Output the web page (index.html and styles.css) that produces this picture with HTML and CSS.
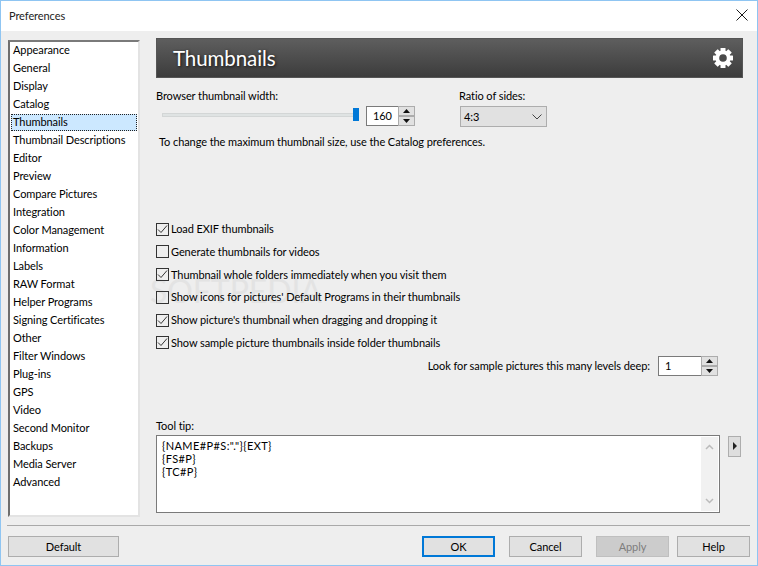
FILE: index.html
```html
<!DOCTYPE html>
<html lang="en">
<head>
<meta charset="utf-8">
<title>Preferences</title>
<link rel="stylesheet" href="styles.css">
</head>
<body>
<div class="window">
  <div class="titlebar">
    <span class="title">Preferences</span>
    <svg class="close" width="12" height="12" viewBox="0 0 12 12"><path d="M.5.5l11 11M11.500.5l-11 11" stroke="#1a1a1a" fill="none"/></svg>
  </div>
  <div class="main">
    <div class="watermark">SOFTPEDIA</div>
    <ul class="nav">
      <li>Appearance</li><li>General</li><li>Display</li><li>Catalog</li>
      <li class="selected">Thumbnails</li><li>Thumbnail Descriptions</li><li>Editor</li><li>Preview</li>
      <li>Compare Pictures</li><li>Integration</li><li>Color Management</li><li>Information</li>
      <li>Labels</li><li>RAW Format</li><li>Helper Programs</li><li>Signing Certificates</li>
      <li>Other</li><li>Filter Windows</li><li>Plug-ins</li><li>GPS</li>
      <li>Video</li><li>Second Monitor</li><li>Backups</li><li>Media Server</li><li>Advanced</li>
    </ul>
    <div class="content">
      <div class="banner">
        <h1>Thumbnails</h1>
        <svg class="gear" width="20" height="20" viewBox="0 0 20 20">
          <g fill="#fff">
            <rect x="7.500" y="0" width="5" height="20" rx=".5"/>
            <rect x="7.500" y="0" width="5" height="20" rx=".5" transform="rotate(45 10 10)"/>
            <rect x="7.500" y="0" width="5" height="20" rx=".5" transform="rotate(90 10 10)"/>
            <rect x="7.500" y="0" width="5" height="20" rx=".5" transform="rotate(135 10 10)"/>
            <circle cx="10" cy="10" r="7.500"/>
          </g>
          <circle cx="10" cy="10" r="3.800" fill="#4a4a4a"/>
        </svg>
      </div>
      <div class="size-row">
        <div class="width-group">
          <div class="label">Browser thumbnail width:</div>
          <div class="slider-row">
            <div class="slider"><div class="track"></div><div class="thumb"></div></div>
            <div class="spin spin-width">
              <span class="spin-value">160</span>
              <span class="spin-btns">
                <span class="spin-btn"><svg width="7" height="4" viewBox="0 0 7 4"><path d="M3.500 0L7 4H0z"/></svg></span>
                <span class="spin-btn"><svg width="7" height="4" viewBox="0 0 7 4"><path d="M0 0h7L3.500 4z"/></svg></span>
              </span>
            </div>
          </div>
        </div>
        <div class="ratio-group">
          <div class="label">Ratio of sides:</div>
          <div class="select">
            <span>4:3</span>
            <svg width="10" height="6" viewBox="0 0 10 6"><path d="M.5.5l4.500 4.500 4.500-4.500" stroke="#444" fill="none"/></svg>
          </div>
        </div>
      </div>
      <p class="info">To change the maximum thumbnail size, use the Catalog preferences.</p>
      <div class="checks">
        <label class="check"><span class="box"><svg width="11" height="11" viewBox="0 0 11 11"><path d="M1 5.500l3 3 6-7" stroke="#333" fill="none"/></svg></span>Load EXIF thumbnails</label>
        <label class="check"><span class="box"></span>Generate thumbnails for videos</label>
        <label class="check"><span class="box"><svg width="11" height="11" viewBox="0 0 11 11"><path d="M1 5.500l3 3 6-7" stroke="#333" fill="none"/></svg></span>Thumbnail whole folders immediately when you visit them</label>
        <label class="check"><span class="box"></span>Show icons for pictures' Default Programs in their thumbnails</label>
        <label class="check"><span class="box"><svg width="11" height="11" viewBox="0 0 11 11"><path d="M1 5.500l3 3 6-7" stroke="#333" fill="none"/></svg></span>Show picture's thumbnail when dragging and dropping it</label>
        <label class="check"><span class="box"><svg width="11" height="11" viewBox="0 0 11 11"><path d="M1 5.500l3 3 6-7" stroke="#333" fill="none"/></svg></span>Show sample picture thumbnails inside folder thumbnails</label>
      </div>
      <div class="levels">
        <span>Look for sample pictures this many levels deep:</span>
        <div class="spin spin-levels">
          <span class="spin-value">1</span>
          <span class="spin-btns">
            <span class="spin-btn"><svg width="7" height="4" viewBox="0 0 7 4"><path d="M3.500 0L7 4H0z"/></svg></span>
            <span class="spin-btn"><svg width="7" height="4" viewBox="0 0 7 4"><path d="M0 0h7L3.500 4z"/></svg></span>
          </span>
        </div>
      </div>
      <div class="label tip-label">Tool tip:</div>
      <div class="tip-row">
        <div class="tip">
          <div class="tip-text">{NAME#P#S:"."}{EXT}<br>{FS#P}<br>{TC#P}</div>
          <div class="scrollbar">
            <svg width="9" height="6" viewBox="0 0 9 6"><path d="M1 5l3.500-3.500L8 5" stroke="#bbb" stroke-width="1.500" fill="none"/></svg>
            <svg width="9" height="6" viewBox="0 0 9 6"><path d="M1 1l3.500 3.500L8 1" stroke="#bbb" stroke-width="1.500" fill="none"/></svg>
          </div>
        </div>
        <div class="tip-btn"><svg width="4" height="8" viewBox="0 0 4 8"><path d="M0 0l4 4-4 4z" fill="#222"/></svg></div>
      </div>
    </div>
  </div>
  <div class="footer">
    <button class="btn btn-default-action">Default</button>
    <div class="actions">
      <button class="btn btn-ok">OK</button>
      <button class="btn gap14">Cancel</button>
      <button class="btn btn-disabled gap14">Apply</button>
      <button class="btn gap8">Help</button>
    </div>
  </div>
</div>
</body>
</html>
```
FILE: styles.css
```css
* { box-sizing: border-box; }
html, body { margin: 0; padding: 0; }
body {
  width: 758px;
  height: 566px;
  overflow: hidden;
  font-family: Lato, "Open Sans", sans-serif;
  font-size: 11px;
  letter-spacing: -0.08px;
  color: #000;
}
.window {
  position: relative;
  isolation: isolate;
  width: 758px;
  height: 566px;
  background: #eeeeee;
  border: 1px solid #8fc5f2;
  display: flex;
  flex-direction: column;
}
.titlebar {
  height: 30px;
  background: #fff;
  display: flex;
  align-items: center;
  justify-content: space-between;
  padding: 0 9px 2px 8px;
  flex: none;
}
.title { color: #222; }
.main {
  flex: none;
  height: 494px;
  display: flex;
  padding: 7px 0 0 7px;
}
.nav {
  list-style: none;
  margin: 2px 0 0 0;
  padding: 0 1px;
  width: 132px;
  height: 477px;
  flex: none;
  background: #fff;
  border-top: 2px solid #7a7a7a;
  border-left: 2px solid #6e6e6e;
  border-right: 2px solid #e3e3e3;
  border-bottom: 2px solid #e3e3e3;
}
.nav li {
  height: 18px;
  line-height: 14px;
  padding-left: 1px;
  border: 1px solid transparent;
  white-space: nowrap;
}
.nav li.selected {
  height: 17px;
  margin-bottom: 1px;
  background: #cce8ff;
  border: 1px dotted #222;
}
.content {
  width: 587px;
  margin-left: 16px;
  flex: none;
}
.banner {
  height: 40px;
  background: linear-gradient(#5e5e5e, #3c3c3c);
  border: 1px solid #555;
  display: flex;
  align-items: center;
  justify-content: space-between;
  padding: 0 9px 0 16px;
}
.banner h1 {
  margin: 0;
  font-size: 20.500px;
  font-weight: 400;
  color: #fff;
  line-height: 26px;
  text-shadow: 1px 1px 3px #111;
}
.size-row {
  display: flex;
  margin-top: 10px;
}
.width-group { width: 303px; }
.label { line-height: 16px; }
.slider-row {
  display: flex;
  align-items: center;
  margin-top: 2px;
}
.slider {
  position: relative;
  width: 197px;
  height: 20px;
  margin-left: 6px;
}
.track {
  position: absolute;
  left: 0;
  right: 2px;
  top: 7px;
  height: 4px;
  background: #dfe3e3;
  border: 1px solid #d3d6d6;
}
.thumb {
  position: absolute;
  right: 0;
  top: 2px;
  width: 6px;
  height: 13px;
  background: #0078d7;
}
.spin {
  display: flex;
  background: #fff;
  border: 1px solid #7a7a7a;
  height: 20px;
}
.spin-width { width: 49px; margin-left: 7px; }
.spin-levels { width: 60px; margin-left: 8px; }
.spin-value { flex: 1; padding-left: 6px; line-height: 18px; }
.spin-btns {
  width: 17px;
  flex: none;
  display: flex;
  flex-direction: column;
  gap: 2px;
  background: #acacac;
  margin: -1px -1px -1px 0;
  border: 1px solid #acacac;
}
.spin-btn {
  flex: 1;
  background: #e1e1e1;
  display: flex;
  align-items: center;
  justify-content: center;
}
.spin-btn svg { fill: #111; }
.select {
  margin: 2px 0 0 1px;
  width: 87px;
  height: 21px;
  background: #e1e1e1;
  border: 1px solid #adadad;
  display: flex;
  align-items: center;
  justify-content: space-between;
  padding: 0 4px 0 3px;
}
.info { margin: 7px 0 0 3px; line-height: 16px; }
.checks {
  margin-top: 71px;
  display: flex;
  flex-direction: column;
  gap: 6.800px;
}
.check {
  display: flex;
  align-items: center;
  height: 16px;
  line-height: 16px;
  white-space: nowrap;
}
.box {
  width: 13px;
  height: 13px;
  border: 1px solid #333;
  margin-right: 2px;
  flex: none;
  display: flex;
  align-items: center;
  justify-content: center;
}
.levels {
  display: flex;
  align-items: center;
  justify-content: flex-end;
  margin-top: 5px;
  padding-right: 25px;
}
.tip-label { margin-top: 42px; }
.tip-row {
  display: flex;
  align-items: flex-start;
  margin-top: 1px;
}
.tip {
  width: 564px;
  height: 78px;
  background: #fff;
  border: 1px solid #7a7a7a;
  display: flex;
  justify-content: space-between;
}
.tip-text { padding: 3px 0 0 5px; line-height: 13px; letter-spacing: 0.4px; }
.scrollbar {
  width: 17px;
  background: #f1f1f1;
  margin: 1px 1px 1px 0;
  display: flex;
  flex-direction: column;
  align-items: center;
  justify-content: space-between;
  padding: 7px 0;
}
.tip-btn {
  width: 13px;
  height: 21px;
  margin: 1px 0 0 8px;
  background: #dedede;
  border: 1px solid #adadad;
  display: flex;
  align-items: center;
  justify-content: center;
}
.watermark {
  position: absolute;
  z-index: -1;
  left: 149px;
  top: 274px;
  font-size: 32px;
  line-height: 32px;
  color: #e3e3e3;
  pointer-events: none;
}
.footer {
  flex: none;
  margin: 0 7px 0 6px;
  border-top: 1px solid #a9a9a9;
  padding: 10px 0 0 1px;
  display: flex;
  justify-content: space-between;
}
.actions { display: flex; }
.btn {
  font: inherit;
  letter-spacing: inherit;
  color: #000;
  height: 21px;
  width: 73px;
  padding: 0;
  background: #e1e1e1;
  border: 1px solid #adadad;
}
.btn-default-action { width: 111px; }
.btn-ok { border: 2px solid #0078d7; }
.btn-disabled { background: #cccccc; border-color: #bfbfbf; color: #7d7d7d; }
.gap14 { margin-left: 14px; }
.gap8 { margin-left: 8px; }
```
